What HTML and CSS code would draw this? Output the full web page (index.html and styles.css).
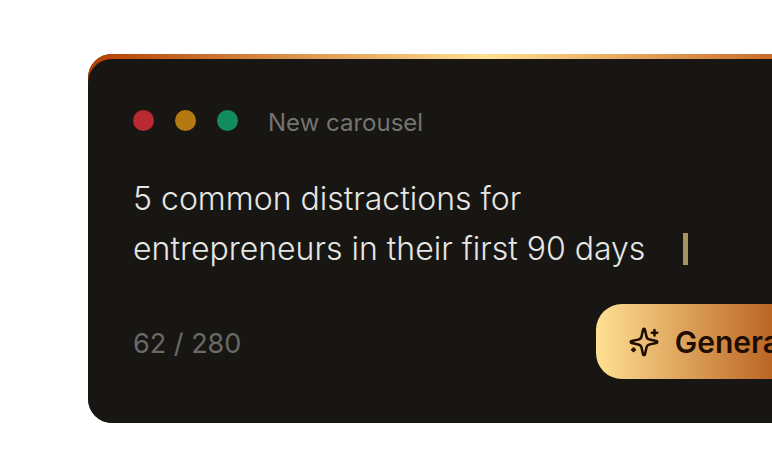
FILE: index.html
```
<!DOCTYPE html>
<html lang="en">

<head>
  <meta charset="UTF-8">
  <meta name="viewport" content="width=device-width, initial-scale=1.0">
  <title>New carousel</title>
  <link rel="stylesheet" href="styles.css">
</head>

<body>
  <form class="card">
    <div class="card-header">
      <span class="dot red"></span>
      <span class="dot yellow"></span>
      <span class="dot green"></span>
      <label class="title" for="topic">New carousel</label>
    </div>

    <div class="prompt">
      <textarea class="topic" id="topic" rows="2" maxlength="280" spellcheck="false">5 common distractions for entrepreneurs in their first 90 days</textarea>
      <span class="cursor"></span>
    </div>

    <div class="card-footer">
      <span class="counter">62 / 280</span>
      <button type="button" class="generate">
        <svg class="icon" viewBox="0 0 30 30" fill="none" stroke="currentColor" stroke-width="2.5" stroke-linecap="round" stroke-linejoin="round" aria-hidden="true">
          <path d="M15 1.8C15.5 1.8 15.9 2.2 16 2.8L17.4 9.2C17.8 11.2 18.8 12.2 20.8 12.6L27.2 14C28.7 14.4 28.7 15.6 27.2 16L20.8 17.4C18.8 17.8 17.8 18.8 17.4 20.8L16 27.2C15.7 28.6 14.3 28.6 14 27.2L12.6 20.8C12.2 18.8 11.2 17.8 9.2 17.4L2.8 16C1.3 15.6 1.3 14.4 2.8 14L9.2 12.6C11.2 12.2 12.2 11.2 12.6 9.2L14 2.8C14.1 2.2 14.5 1.8 15 1.8Z" />
          <path d="M25.5 3V8.4M22.8 5.7H28.2" />
          <path d="M4.5 21.5V24.1M3.2 22.8H5.8" />
        </svg>
        <span>Generate</span>
      </button>
    </div>
  </form>
</body>

</html>
```
FILE: styles.css
```
body {
  margin: 0;
  padding: 54px 0 50px 88px;
  background-color: #fff;
  font-family: Inter, sans-serif;
  overflow: hidden;
}

.card {
  position: relative;
  box-sizing: border-box;
  min-width: 798px;
  padding: 56px 45px 44px;
  background-color: #171613;
  border-radius: 24px;
  overflow: hidden;
}

/* gradient strip that follows the top corners */
.card::before {
  content: "";
  position: absolute;
  inset: 0 0 auto;
  height: 32px;
  background: linear-gradient(to right, #b43f00, #ffe093, #b43f00);
}

.card::after {
  content: "";
  position: absolute;
  inset: 5px 0 0;
  background-color: #171613;
  border-radius: 24px;
}

.card-header,
.prompt,
.card-footer {
  position: relative;
  z-index: 1;
  display: flex;
}

.card-header {
  align-items: flex-start;
  gap: 21px;
}

.dot {
  width: 21px;
  height: 21px;
  border-radius: 50%;
}

.red {
  background-color: #ba2831;
}

.yellow {
  background-color: #b47a11;
}

.green {
  background-color: #148a60;
}

.title {
  margin-left: 9px;
  font-size: 24px;
  line-height: 26px;
  color: #747371;
}

.prompt {
  align-items: flex-end;
  margin-top: 38px;
}

.topic {
  width: 550px;
  height: 100px;
  margin: 0;
  padding: 0;
  border: none;
  outline: none;
  resize: none;
  overflow: hidden;
  background: transparent;
  color: #e6e6e4;
  font-family: inherit;
  font-size: 32px;
  font-weight: 300;
  line-height: 50px;
}

.cursor {
  width: 5px;
  height: 32px;
  margin-bottom: 9px;
  background-color: #a6935f;
}

.card-footer {
  align-items: center;
  justify-content: space-between;
  margin-top: 30px;
}

.counter {
  padding-top: 4px;
  font-size: 27px;
  line-height: 36px;
  color: #6a6967;
}

.generate {
  display: flex;
  align-items: center;
  gap: 16px;
  height: 75px;
  padding: 0 33px;
  border: none;
  border-radius: 26px;
  background: linear-gradient(to right, #ffe093, #b8601f 75%, #b43f00);
  color: #1f0d02;
  font-family: inherit;
  font-size: 30px;
  font-weight: 600;
  cursor: pointer;
}

.icon {
  width: 30px;
  height: 30px;
}
```
